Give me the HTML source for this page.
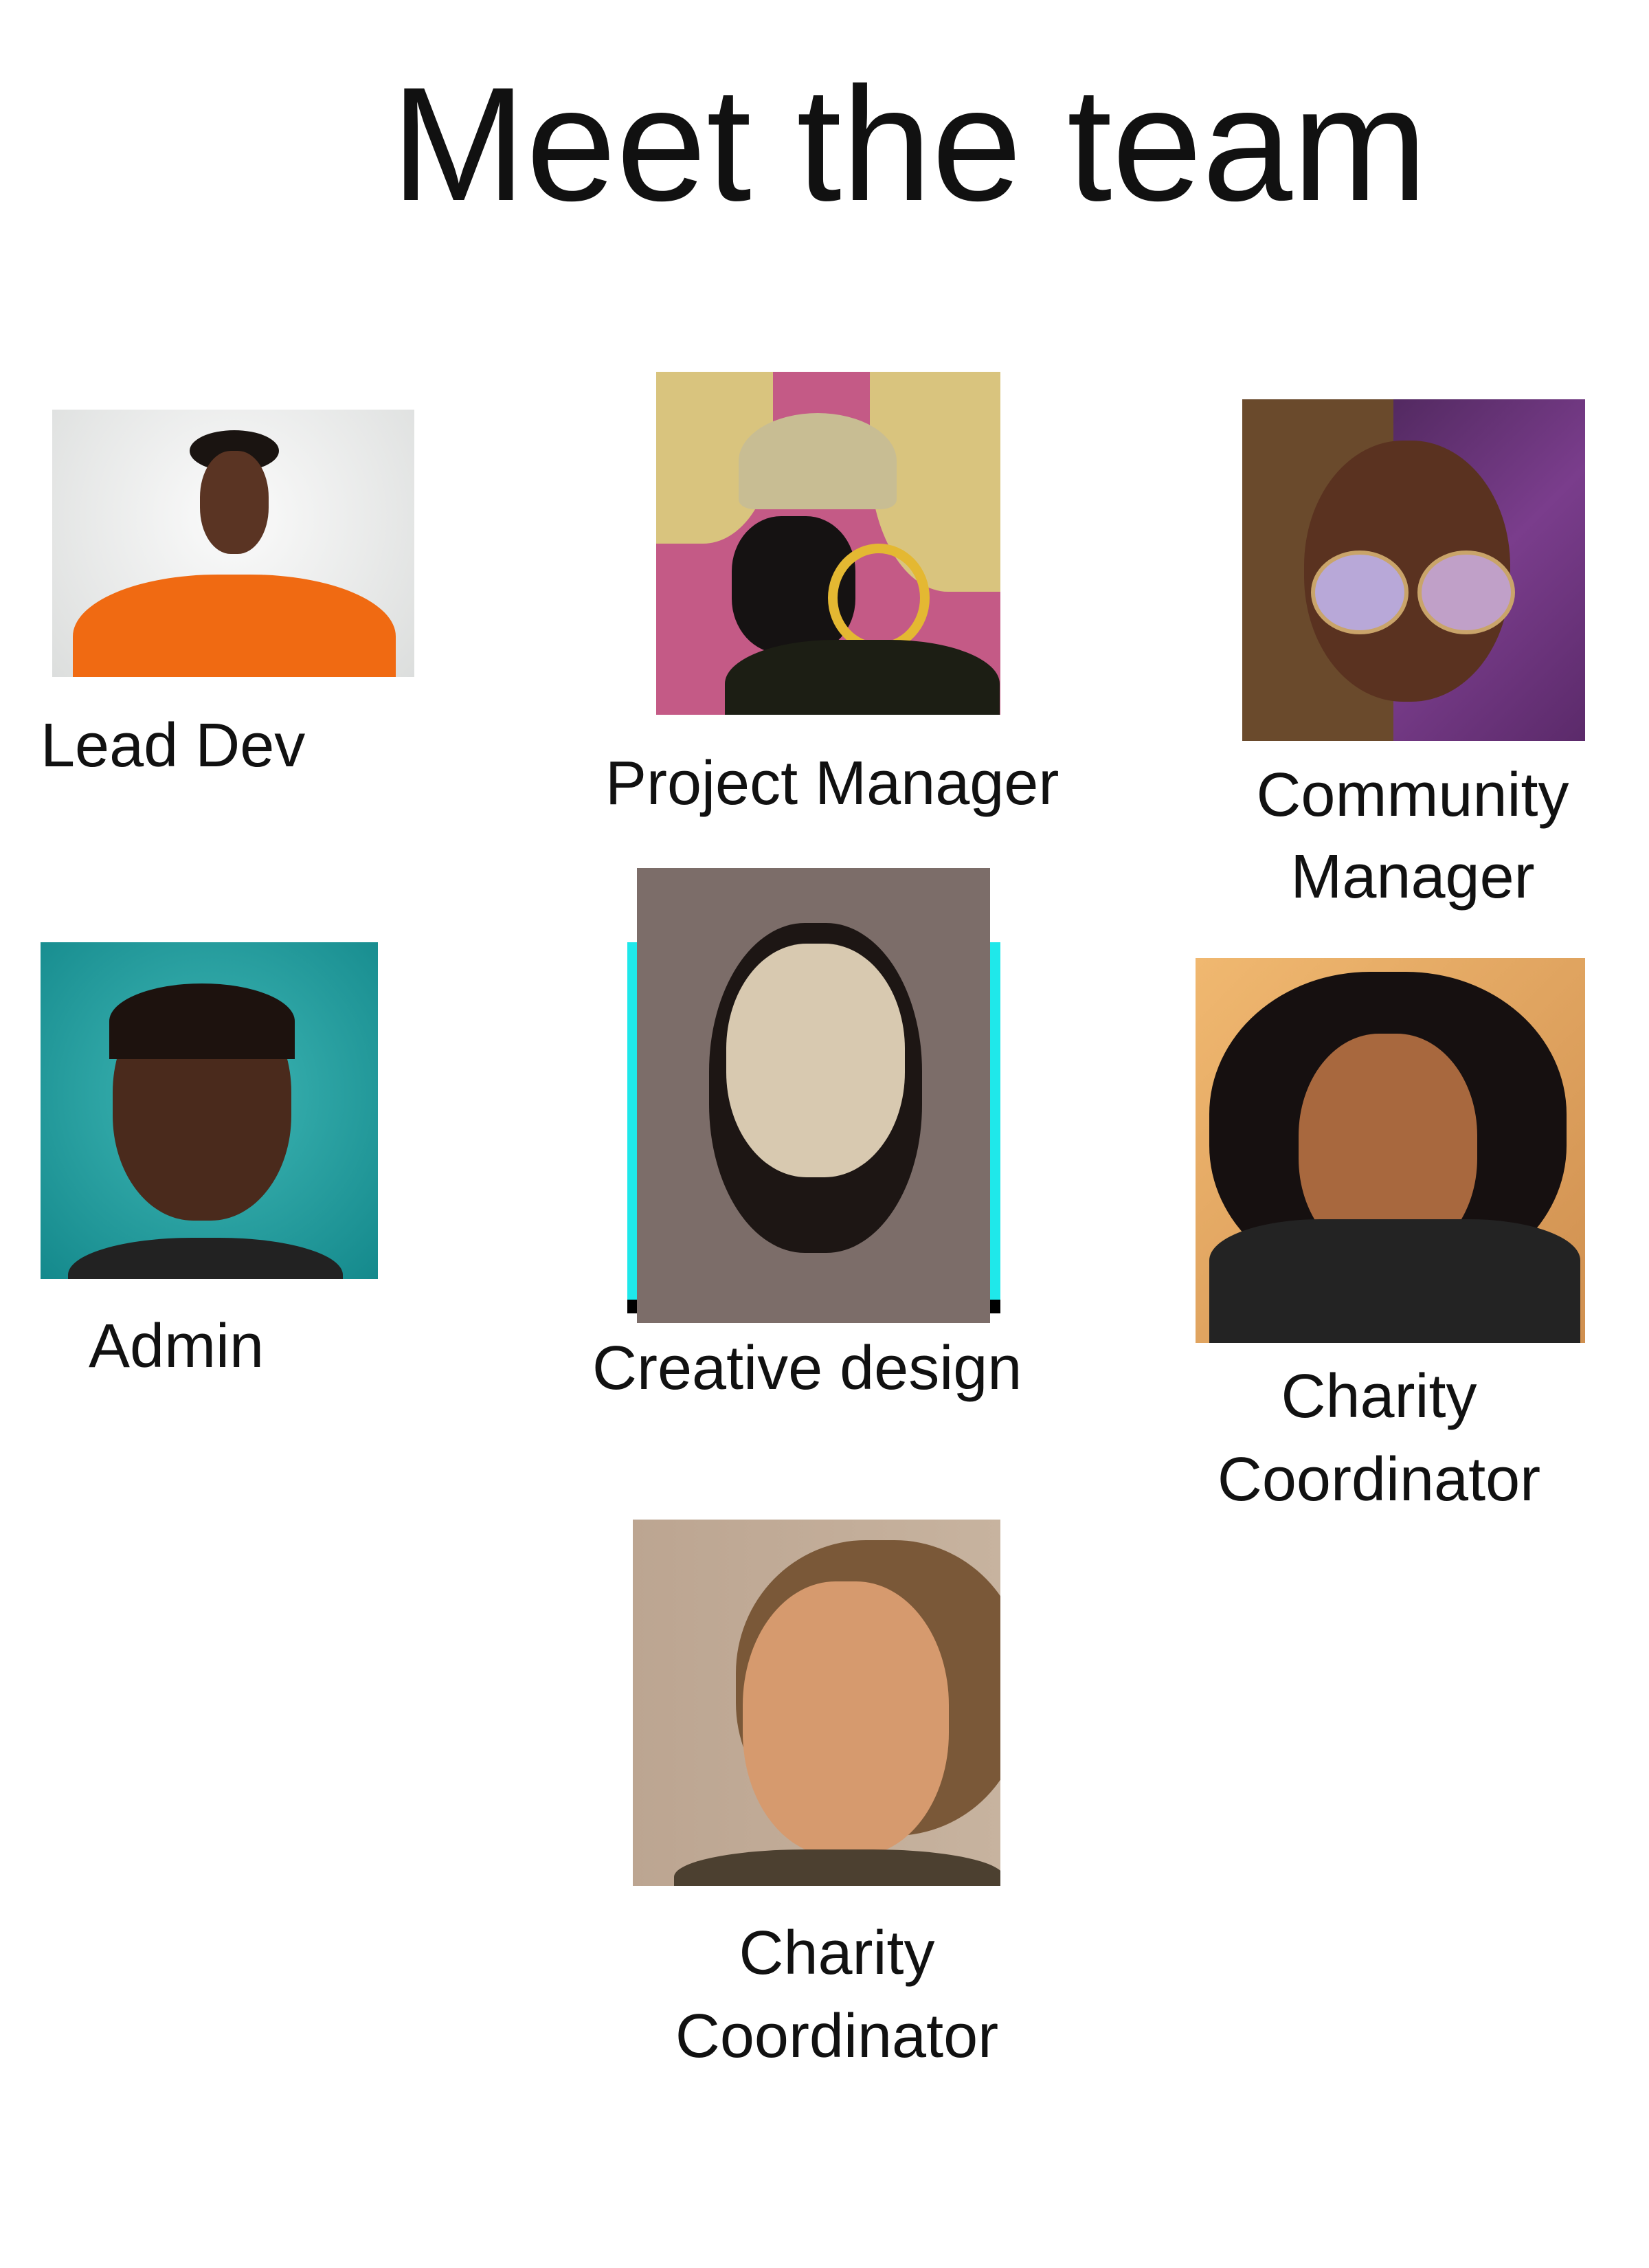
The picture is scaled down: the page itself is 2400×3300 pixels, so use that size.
<!DOCTYPE html>
<html><head><meta charset="utf-8"><style>
html,body{margin:0;padding:0;background:#fff;}
body{width:2400px;height:3300px;position:relative;overflow:hidden;font-family:"Liberation Sans",sans-serif;color:#111;}
.t{position:absolute;line-height:1;white-space:nowrap;}
.c{text-align:center;}
.i{position:absolute;overflow:hidden;}
.l{font-size:90px;}
</style></head><body>
<div class="t" style="left:569px;top:92px;font-size:236px;">Meet the team</div>

<!-- Lead Dev -->
<div class="i" style="left:76px;top:596px;width:527px;height:389px;background:radial-gradient(circle at 50% 40%,#fbfbfb,#dcdedd);">
 <div style="position:absolute;left:200px;top:30px;width:130px;height:60px;border-radius:50%;background:#1a1411;"></div>
 <div style="position:absolute;left:215px;top:60px;width:100px;height:150px;border-radius:45%;background:#5a3423;"></div>
 <div style="position:absolute;left:30px;top:240px;width:470px;height:200px;border-radius:45% 45% 0 0;background:#f06a12;"></div>
</div>
<div class="t l" style="left:59px;top:1040px;">Lead Dev</div>

<!-- Project Manager -->
<div class="i" style="left:955px;top:541px;width:501px;height:499px;background:#c45a86;">
 <div style="position:absolute;left:0;top:0;width:170px;height:250px;background:#d9c47e;border-radius:0 0 60% 0;"></div>
 <div style="position:absolute;right:0;top:0;width:190px;height:320px;background:#d9c47e;border-radius:0 0 0 60%;"></div>
 <div style="position:absolute;left:120px;top:60px;width:230px;height:140px;background:#c8bd93;border-radius:50% 50% 10% 10%;"></div>
 <div style="position:absolute;left:110px;top:210px;width:180px;height:200px;background:#151212;border-radius:40%;"></div>
 <div style="position:absolute;left:250px;top:250px;width:120px;height:130px;border:14px solid #e4b832;border-radius:50%;"></div>
 <div style="position:absolute;left:100px;top:390px;width:400px;height:160px;background:#1c1e14;border-radius:40% 40% 0 0;"></div>
</div>
<div class="t l" style="left:881px;top:1095px;">Project Manager</div>

<!-- Community Manager -->
<div class="i" style="left:1808px;top:581px;width:499px;height:497px;background:linear-gradient(135deg,#3c1e48,#7a3d8c 60%,#5b2a6a);">
 <div style="position:absolute;left:0;top:0;width:220px;height:497px;background:#6a4a2c;"></div>
 <div style="position:absolute;left:90px;top:60px;width:300px;height:380px;border-radius:48%;background:#5a3220;"></div>
 <div style="position:absolute;left:100px;top:220px;width:130px;height:110px;border-radius:50%;background:#b8a8d8;border:6px solid #c9a46a;"></div>
 <div style="position:absolute;left:255px;top:220px;width:130px;height:110px;border-radius:50%;background:#c0a0c8;border:6px solid #c9a46a;"></div>
</div>
<div class="t l c" style="left:1756px;width:600px;top:1112px;">Community</div>
<div class="t l c" style="left:1756px;width:600px;top:1231px;">Manager</div>

<!-- Admin -->
<div class="i" style="left:59px;top:1371px;width:491px;height:490px;background:radial-gradient(circle at 50% 45%,#40b8b6,#14898c);">
 <div style="position:absolute;left:105px;top:65px;width:260px;height:340px;border-radius:45%;background:#4a2a1c;"></div>
 <div style="position:absolute;left:100px;top:60px;width:270px;height:110px;border-radius:50% 50% 0 0;background:#1d120e;"></div>
 <div style="position:absolute;left:40px;top:430px;width:400px;height:120px;border-radius:45% 45% 0 0;background:#222;"></div>
</div>
<div class="t l" style="left:129px;top:1914px;">Admin</div>

<!-- Creative design -->
<div class="i" style="left:913px;top:1371px;width:543px;height:540px;background:#000;"></div>
<div class="i" style="left:913px;top:1371px;width:14px;height:520px;background:#1fe8ea;"></div>
<div class="i" style="left:1441px;top:1371px;width:15px;height:520px;background:#1fe8ea;"></div>
<div class="i" style="left:927px;top:1263px;width:514px;height:662px;background:#7c6d69;">
 <div style="position:absolute;left:105px;top:80px;width:310px;height:480px;border-radius:45%;background:#1d1614;"></div>
 <div style="position:absolute;left:130px;top:110px;width:260px;height:340px;border-radius:45%;background:#d8c9b0;"></div>
</div>
<div class="t l" style="left:862px;top:1946px;">Creative design</div>

<!-- Charity right -->
<div class="i" style="left:1740px;top:1394px;width:567px;height:560px;background:linear-gradient(135deg,#f0b870,#d09050);">
 <div style="position:absolute;left:20px;top:20px;width:520px;height:460px;border-radius:45%;background:#161010;"></div>
 <div style="position:absolute;left:150px;top:110px;width:260px;height:330px;border-radius:45%;background:#a8683e;"></div>
 <div style="position:absolute;left:20px;top:380px;width:540px;height:200px;border-radius:30% 30% 0 0;background:#232323;"></div>
</div>
<div class="t l c" style="left:1707px;width:600px;top:1987px;">Charity</div>
<div class="t l c" style="left:1707px;width:600px;top:2108px;">Coordinator</div>

<!-- Charity bottom -->
<div class="i" style="left:921px;top:2211px;width:535px;height:533px;background:linear-gradient(90deg,#bca591,#c7b39f);">
 <div style="position:absolute;left:150px;top:30px;width:420px;height:430px;border-radius:45%;background:#7a5838;"></div>
 <div style="position:absolute;left:160px;top:90px;width:300px;height:400px;border-radius:45%;background:#d69a6e;"></div>
 <div style="position:absolute;left:60px;top:480px;width:480px;height:100px;background:#4c4030;border-radius:40% 40% 0 0;"></div>
</div>
<div class="t l c" style="left:918px;width:600px;top:2797px;">Charity</div>
<div class="t l c" style="left:918px;width:600px;top:2918px;">Coordinator</div>
</body></html>
